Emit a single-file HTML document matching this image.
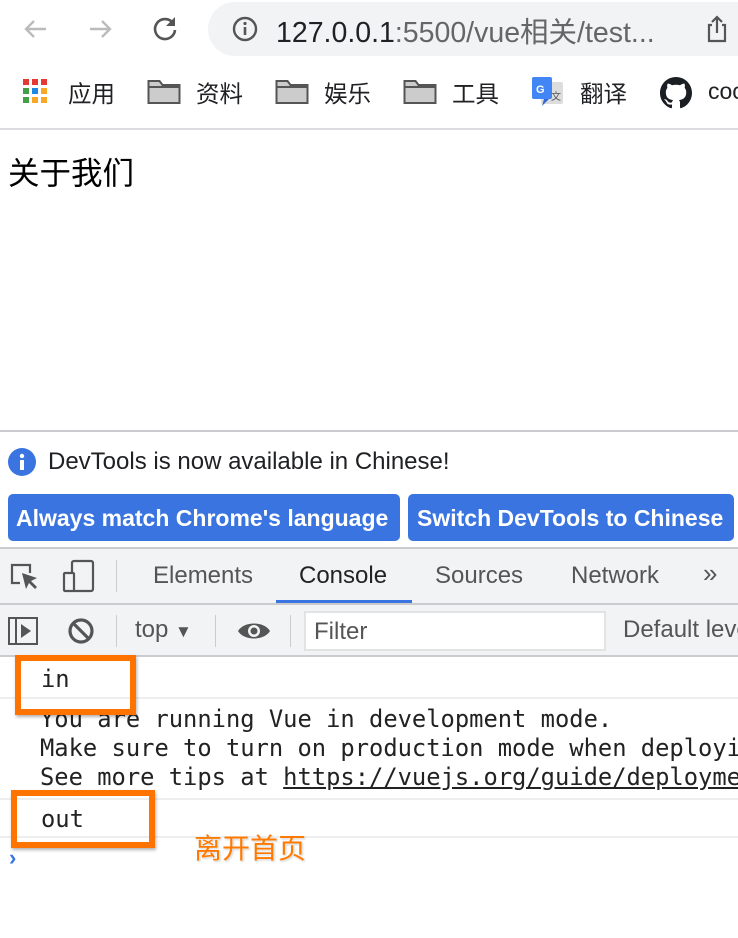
<!DOCTYPE html>
<html style="overflow:hidden"><head><meta charset="utf-8"><style>
*{margin:0;padding:0;box-sizing:border-box}
html,body{width:738px;height:938px;overflow:hidden}
body{background:#fff;position:relative;font-family:"Liberation Sans","Noto Sans CJK SC",sans-serif;color:#202124}
#w{position:absolute;left:0;top:0;width:738px;height:938px;overflow:hidden}
.a{position:absolute;white-space:nowrap}
.mono{font-family:"DejaVu Sans Mono","Liberation Mono",monospace;font-size:24px;color:#222;transform:scaleX(0.99);transform-origin:left center}
.dt{font-size:24px}
</style></head><body><div id="w">
<!-- toolbar -->
<svg class="a" style="left:20px;top:14px" width="30" height="30" viewBox="0 0 30 30"><path d="M26 15H6M14 7l-8 8 8 8" stroke="#bbb" stroke-width="2.4" fill="none"/></svg>
<svg class="a" style="left:86px;top:14px" width="30" height="30" viewBox="0 0 30 30"><path d="M4 15h20M16 7l8 8-8 8" stroke="#bbb" stroke-width="2.4" fill="none"/></svg>
<svg class="a" style="left:150px;top:13px" width="30" height="30" viewBox="0 0 30 30"><path d="M23 10A10 10 0 1 0 25 17" stroke="#555" stroke-width="2.6" fill="none"/><path d="M25 4v9h-9z" fill="#555"/></svg>
<div class="a" style="left:208px;top:2px;width:560px;height:54px;background:#f1f3f4;border-radius:27px"></div>
<svg class="a" style="left:231px;top:15px" width="28" height="28" viewBox="0 0 28 28"><circle cx="14" cy="14" r="11" stroke="#555" stroke-width="2.4" fill="none"/><path d="M14 12v8" stroke="#555" stroke-width="2.6"/><circle cx="14" cy="8.5" r="1.6" fill="#555"/></svg>
<div class="a" style="left:276px;top:10px;font-size:28.5px;color:#202124">127.0.0.1<span style="color:#666">:5500/vue相关/test...</span></div>
<svg class="a" style="left:704px;top:14px" width="26" height="30" viewBox="0 0 26 30"><path d="M8 11H5v16h16V11h-3M13 19V3M8 8l5-5 5 5" stroke="#555" stroke-width="2.2" fill="none"/></svg>
<!-- bookmarks -->
<svg class="a" style="left:22px;top:78px" width="28" height="28" viewBox="0 0 28 28">
<rect x="1" y="1" width="6" height="6" fill="#e53935"/><rect x="10" y="1" width="6" height="6" fill="#e53935"/><rect x="19" y="1" width="6" height="6" fill="#e53935"/>
<rect x="1" y="10" width="6" height="6" fill="#43a047"/><rect x="10" y="10" width="6" height="6" fill="#1e88e5"/><rect x="19" y="10" width="6" height="6" fill="#f9a825"/>
<rect x="1" y="19" width="6" height="6" fill="#43a047"/><rect x="10" y="19" width="6" height="6" fill="#f9a825"/><rect x="19" y="19" width="6" height="6" fill="#f9a825"/></svg>
<div class="a" style="left:68px;top:75px;font-size:23.5px">应用</div>
<svg class="a" style="left:147px;top:79px" width="34" height="26" viewBox="0 0 34 26"><path d="M1.5 2h11l3 4h17v18h-31z" fill="#ccc" stroke="#555" stroke-width="2"/><path d="M1.5 8h31" stroke="#555" stroke-width="2"/></svg>
<div class="a" style="left:196px;top:75px;font-size:23.5px">资料</div>
<svg class="a" style="left:275px;top:79px" width="34" height="26" viewBox="0 0 34 26"><path d="M1.5 2h11l3 4h17v18h-31z" fill="#ccc" stroke="#555" stroke-width="2"/><path d="M1.5 8h31" stroke="#555" stroke-width="2"/></svg>
<div class="a" style="left:324px;top:75px;font-size:23.5px">娱乐</div>
<svg class="a" style="left:403px;top:79px" width="34" height="26" viewBox="0 0 34 26"><path d="M1.5 2h11l3 4h17v18h-31z" fill="#ccc" stroke="#555" stroke-width="2"/><path d="M1.5 8h31" stroke="#555" stroke-width="2"/></svg>
<div class="a" style="left:452px;top:75px;font-size:23.5px">工具</div>
<svg class="a" style="left:531px;top:76px" width="34" height="32" viewBox="0 0 34 32"><rect x="10" y="6" width="22" height="22" rx="2" fill="#ddd"/><rect x="1" y="1" width="20" height="22" rx="2" fill="#4285f4"/><path d="M13 23l-2 7 7-7z" fill="#3367d6"/><text x="5" y="17" font-size="11" fill="#fff" font-family="Liberation Sans" font-weight="bold">G</text><text x="20" y="24" font-size="10" fill="#555" font-family="Noto Sans CJK SC">文</text></svg>
<div class="a" style="left:580px;top:75px;font-size:23.5px">翻译</div>
<svg class="a" style="left:660px;top:77px" width="32" height="32" viewBox="0 0 16 16"><path fill="#1b1f23" d="M8 0C3.58 0 0 3.58 0 8c0 3.54 2.29 6.53 5.47 7.59.4.07.55-.17.55-.38 0-.19-.01-.82-.01-1.49-2.01.37-2.53-.49-2.69-.94-.09-.23-.48-.94-.82-1.13-.28-.15-.68-.52-.01-.53.63-.01 1.08.58 1.23.82.72 1.21 1.87.87 2.33.66.07-.52.28-.87.51-1.07-1.78-.2-3.64-.89-3.64-3.95 0-.87.31-1.59.82-2.150-.08-.2-.36-1.02.08-2.12 0 0 .67-.21 2.2.82.64-.18 1.32-.27 2-.27.68 0 1.36.09 2 .27 1.53-1.04 2.2-.82 2.2-.82.44 1.1.16 1.92.08 2.12.51.56.82 1.27.82 2.15 0 3.07-1.87 3.75-3.65 3.95.29.25.54.73.54 1.48 0 1.07-.01 1.93-.01 2.2 0 .21.15.46.55.38A8.013 8.013 0 0016 8c0-4.42-3.58-8-8-8z"/></svg>
<div class="a" style="left:708px;top:78px;font-size:23px">coc</div>
<div class="a" style="left:0;top:128px;width:738px;height:2px;background:#dadce0"></div>
<!-- page -->
<div class="a" style="left:8px;top:148px;font-size:31.5px;color:#000">关于我们</div>
<!-- devtools -->
<div class="a" style="left:0;top:430px;width:738px;height:2px;background:#cbcbcf"></div>
<svg class="a" style="left:7px;top:447px" width="30" height="30"><circle cx="15" cy="15" r="14" fill="#3a74e0"/><rect x="13" y="13" width="4" height="10" fill="#fff"/><circle cx="15" cy="9" r="2.2" fill="#fff"/></svg>
<div class="a dt" style="left:48px;top:448px">DevTools is now available in Chinese!</div>
<div class="a" style="left:8px;top:494px;width:392px;height:47px;background:#3a74e0;border-radius:5px"></div>
<div class="a" style="left:408px;top:494px;width:326px;height:47px;background:#3a74e0;border-radius:5px"></div>
<div class="a" style="left:16px;top:505px;font-size:23px;color:#fff;font-weight:bold">Always match Chrome's language</div>
<div class="a" style="left:417px;top:505px;font-size:23px;color:#fff;font-weight:bold">Switch DevTools to Chinese</div>
<div class="a" style="left:0;top:547px;width:738px;height:58px;background:#f1f3f4;border-top:2px solid #cbcbcf;border-bottom:2px solid #cbcbcf"></div>
<svg class="a" style="left:8px;top:561px" width="34" height="32" viewBox="0 0 34 32"><path d="M12 22H4V4h18v8" stroke="#555" stroke-width="2.2" fill="none"/><path d="M14 12l4 16 3-6 6 6 2-2-6-6 6-3z" fill="#555"/></svg>
<svg class="a" style="left:62px;top:559px" width="34" height="34" viewBox="0 0 34 34"><rect x="10" y="2" width="21" height="30" rx="2" stroke="#555" stroke-width="2.2" fill="none"/><rect x="2" y="14" width="10" height="18" rx="1" stroke="#555" stroke-width="2.2" fill="#f1f3f4"/></svg>
<div class="a" style="left:116px;top:560px;width:1px;height:32px;background:#ccc"></div>
<div class="a dt" style="left:153px;top:562px;color:#555">Elements</div>
<div class="a dt" style="left:299px;top:562px;color:#222">Console</div>
<div class="a dt" style="left:435px;top:562px;color:#555">Sources</div>
<div class="a dt" style="left:571px;top:562px;color:#555">Network</div>
<div class="a" style="left:703px;top:558px;font-size:26px;color:#555">»</div>
<div class="a" style="left:276px;top:600px;width:136px;height:3px;background:#3a74e0"></div>
<div class="a" style="left:0;top:605px;width:738px;height:52px;background:#f1f3f4;border-bottom:2px solid #cbcbcf"></div>
<svg class="a" style="left:7px;top:616px" width="32" height="30" viewBox="0 0 32 30"><rect x="2" y="2" width="28" height="26" stroke="#555" stroke-width="2" fill="none"/><path d="M9 2v26" stroke="#555" stroke-width="2"/><path d="M14 8l10 7-10 7z" fill="#555"/></svg>
<svg class="a" style="left:67px;top:617px" width="28" height="28" viewBox="0 0 28 28"><circle cx="14" cy="14" r="11" stroke="#555" stroke-width="3.2" fill="none"/><path d="M6 6l16 16" stroke="#555" stroke-width="3.2"/></svg>
<div class="a" style="left:116px;top:615px;width:1px;height:32px;background:#ccc"></div>
<div class="a dt" style="left:135px;top:616px;color:#555">top <span style="font-size:17px">▼</span></div>
<div class="a" style="left:215px;top:615px;width:1px;height:32px;background:#ccc"></div>
<svg class="a" style="left:236px;top:619px" width="36" height="24" viewBox="0 0 36 24"><path d="M2 12C8 2 28 2 34 12 28 22 8 22 2 12z" fill="#555"/><circle cx="18" cy="12" r="6" fill="#f1f3f4"/><circle cx="18" cy="12" r="3.5" fill="#555"/></svg>
<div class="a" style="left:290px;top:615px;width:1px;height:32px;background:#ccc"></div>
<div class="a" style="left:304px;top:611px;width:302px;height:40px;background:#fff;border:2px solid #e3e3e3"></div>
<div class="a dt" style="left:314px;top:618px;color:#555">Filter</div>
<div class="a dt" style="left:623px;top:616px;color:#555">Default leve</div>
<!-- console -->
<div class="a mono" style="left:41px;top:665px">in</div>
<div class="a" style="left:0;top:697px;width:738px;height:2px;background:#eee"></div>
<div class="a mono" style="left:40px;top:705px">You are running Vue in development mode.</div>
<div class="a mono" style="left:40px;top:734px">Make sure to turn on production mode when deployi</div>
<div class="a mono" style="left:40px;top:763px">See more tips at <u>https://vuejs.org/guide/deployme</u></div>
<div class="a" style="left:0;top:798px;width:738px;height:2px;background:#eee"></div>
<div class="a mono" style="left:41px;top:805px">out</div>
<div class="a" style="left:0;top:836px;width:738px;height:2px;background:#eee"></div>
<div class="a" style="left:9px;top:845px;color:#3a74e0;font-size:22px;font-weight:bold">›</div>
<div class="a" style="left:15px;top:655px;width:121px;height:60px;border:6px solid #ff7300;box-shadow:1px 2px 3px rgba(0,0,0,.3)"></div>
<div class="a" style="left:11px;top:790px;width:144px;height:58px;border:6px solid #ff7300;box-shadow:1px 2px 3px rgba(0,0,0,.3)"></div>
<div class="a" style="left:194px;top:827px;font-size:28px;color:#ff7a00;text-shadow:0 0 2px #fff,1px 1px 2px #bbb">离开首页</div>
</div></body></html>
